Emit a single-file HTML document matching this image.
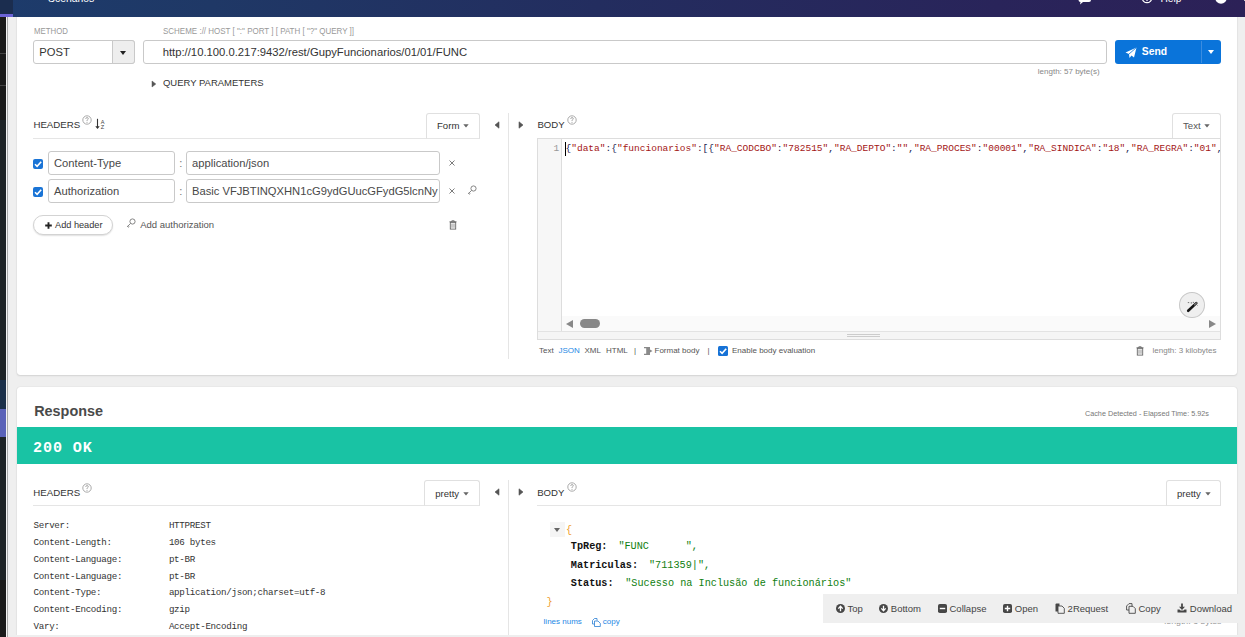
<!DOCTYPE html>
<html><head><meta charset="utf-8">
<style>
*{box-sizing:border-box;margin:0;padding:0}
html,body{width:1245px;height:637px;overflow:hidden;background:#efefef;font-family:"Liberation Sans",sans-serif;color:#333}
.a{position:absolute}
.t{position:absolute;white-space:pre;line-height:1}
.mono{font-family:"Liberation Mono",monospace}
.card{position:absolute;left:17px;width:1220px;background:#fff;border-radius:3px;box-shadow:0 0 1px rgba(0,0,0,.2),0 1px 2px rgba(0,0,0,.1)}
.inp{position:absolute;border:1px solid #c8c8c8;border-radius:3px;background:#fff}
.lbl{font-size:7.8px;color:#999}
.cb{position:absolute;width:10px;height:10px;background:#1672d6;border-radius:1.5px}
.tab{position:absolute;border:1px solid #ddd;border-bottom:none;border-radius:3px 3px 0 0;background:#fff}
.hline{position:absolute;height:1px;background:#e3e3e3}
.vline{position:absolute;width:1px;background:#e3e3e3}
.help{position:absolute;width:8px;height:8px;border:1px solid #aaa;border-radius:50%;font-size:6px;color:#999;text-align:center;line-height:6px}
</style></head><body>

<!-- left strip -->
<div class="a" style="left:0;top:0;width:6px;height:637px;background:#1a1a1a"></div>
<div class="a" style="left:0;top:120px;width:6px;height:260px;background:#1e2326"></div>
<div class="a" style="left:0;top:380px;width:6px;height:29px;background:#1a2f4a"></div>
<div class="a" style="left:0;top:409px;width:6px;height:28px;background:#5a62b8"></div>
<div class="a" style="left:0;top:437px;width:6px;height:143px;background:#1e2326"></div>
<div class="a" style="left:0;top:53px;width:6px;height:1px;background:#444"></div>
<div class="a" style="left:0;top:85px;width:6px;height:1px;background:#444"></div>
<div class="a" style="left:6px;top:0;width:1px;height:637px;background:#f4f4f4"></div>
<div class="a" style="left:7px;top:0;width:1px;height:637px;background:#a8a8a8"></div>

<!-- card 1 -->
<div class="card" style="top:-10px;height:384.5px"></div>

<!-- card 2 -->
<div class="card" style="top:387px;height:248px;border-radius:3px 3px 0 0"></div>

<!-- header bar -->
<div class="a" style="left:0;top:0;width:1245px;height:17px;background:linear-gradient(90deg,#1d3b6b 0%,#1f3866 17%,#232d5f 48%,#29245a 80%,#2c2157 100%)"></div>
<div class="a" style="left:0;top:0;width:13px;height:14px;background:#1b2d4f"></div>
<div class="a" style="left:0;top:14px;width:13px;height:3px;background:#6b63d6"></div>

<div class="t" style="left:48px;top:-6.5px;font-size:10.4px;color:#fff">Scenarios</div>
<svg class="a" style="left:1077px;top:-6px" width="16" height="11" viewBox="0 0 16 11"><path d="M1.5 0 H12 Q14 0 14 2 V6 Q14 8 12 8 H6 L3 10.5 L3.5 8 Q1.5 8 1.5 6 Z" fill="#fff"/></svg>
<svg class="a" style="left:1140.8px;top:-8.4px" width="12" height="12" viewBox="0 0 12 12"><circle cx="6" cy="6" r="4.7" fill="none" stroke="#fff" stroke-width="1.2"/><circle cx="6" cy="8.6" r="0.7" fill="#fff"/></svg>
<div class="t" style="left:1160.5px;top:-6.4px;font-size:10.2px;color:#fff">Help</div>
<svg class="a" style="left:1215.3px;top:-8.5px" width="12" height="12" viewBox="0 0 12 12"><circle cx="6" cy="6" r="5.8" fill="#fff"/></svg>
<div class="a" style="left:1243.5px;top:0;width:1.5px;height:1.2px;background:#ccc"></div>
<div class="t" style="left:33.60px;top:26.92px;font-size:8.6px;color:#999;transform:scaleX(0.91);transform-origin:0 0">METHOD</div>
<div class="t" style="left:163.00px;top:26.92px;font-size:8.6px;color:#999;transform:scaleX(0.93);transform-origin:0 0">SCHEME :// HOST [ ":" PORT ] [ PATH [ "?" QUERY ]]</div>
<div class="a" style="left:33px;top:40px;width:102.00px;height:24.00px;border:1px solid #c9c9c9;border-radius:3px;background:#fff"></div>
<div class="a" style="left:112px;top:40px;width:23.00px;height:24.00px;border:1px solid #c9c9c9;border-radius:0 3px 3px 0;background:#eee"></div>
<div class="a" style="left:120.3px;top:50.5px;width:0;height:0;border-left:3.5px solid transparent;border-right:3.5px solid transparent;border-top:4px solid #222"></div>
<div class="t" style="left:39.30px;top:46.72px;font-size:11.2px;color:#333;">POST</div>
<div class="a" style="left:143px;top:40px;width:964.00px;height:24.00px;border:1px solid #c9c9c9;border-radius:3px;background:#fff"></div>
<div class="t" style="left:162.70px;top:46.65px;font-size:11.28px;color:#333;">http://10.100.0.217:9432/rest/GupyFuncionarios/01/01/FUNC</div>
<div class="t" style="left:1037.80px;top:67.83px;font-size:8px;color:#888;">length: 57 byte(s)</div>
<div class="a" style="left:1115px;top:40px;width:106.00px;height:24.00px;background:#0a74da;border-radius:3px"></div>
<div class="a" style="left:1201px;top:41px;width:1.00px;height:22.00px;background:#3a8ce0"></div>
<div class="a" style="left:1207.6px;top:50px;width:0;height:0;border-left:3.7px solid transparent;border-right:3.7px solid transparent;border-top:4px solid #fff"></div>
<svg class="a" style="left:1125px;top:46.7px" width="12" height="12" viewBox="0 0 12 12"><path d="M11.5 0.5 L0.5 5.5 L4 7 L4.5 11 L6.5 8.5 L9 10.5 Z" fill="#fff"/><path d="M11.5 0.5 L4 7" stroke="#0b74d8" stroke-width="0.8"/></svg>
<div class="t" style="left:1141.80px;top:47.44px;font-size:10.35px;color:#fff;font-weight:bold;">Send</div>
<svg class="a" style="left:150.5px;top:80px" width="6" height="8" viewBox="0 0 6 8"><path d="M1 1 V7 L4.8 4 Z" fill="#555" stroke="#555" stroke-width="0.5" stroke-linejoin="round"/></svg>
<div class="t" style="left:162.90px;top:78.42px;font-size:9.9px;color:#333;transform:scaleX(0.96);transform-origin:0 0">QUERY PARAMETERS</div>
<div class="t" style="left:33.40px;top:120.09px;font-size:9.7px;color:#333;">HEADERS</div>
<svg class="a" style="left:82.4px;top:115.4px" width="10" height="10" viewBox="0 0 10 10"><circle cx="5" cy="5" r="4.2" fill="none" stroke="#8f8f8f" stroke-width="0.75"/><path d="M3.7 3.9 Q3.8 2.6 5 2.6 Q6.3 2.6 6.3 3.7 Q6.3 4.4 5.4 4.9 Q5 5.2 5 6" fill="none" stroke="#8a8a8a" stroke-width="0.75"/><circle cx="5" cy="7.2" r="0.5" fill="#8a8a8a"/></svg>
<svg class="a" style="left:94px;top:118px" width="12" height="12" viewBox="0 0 12 12"><path d="M3.5 0.8 V10" stroke="#333" stroke-width="1.1"/><path d="M1.3 8.2 L3.5 11 L5.7 8.2 Z" fill="#333"/><text x="8.5" y="5.6" font-size="5.6" text-anchor="middle" fill="#444" font-family="Liberation Sans">A</text><text x="8.5" y="11.3" font-size="5.6" text-anchor="middle" fill="#444" font-family="Liberation Sans">Z</text></svg>
<div class="a" style="left:33px;top:138px;width:447.00px;height:1.00px;background:#e5e5e5"></div>
<div class="a" style="left:426px;top:113px;width:54.00px;height:26.00px;border:1px solid #e0e0e0;border-bottom-color:#e5e5e5;border-radius:3px 3px 0 0;background:#fff"></div>
<div class="t" style="left:437.00px;top:120.97px;font-size:9.6px;color:#333;">Form</div>
<svg class="a" style="left:463.3px;top:124.4px" width="6" height="4" viewBox="0 0 6 4"><path d="M0.3 0.3 H5.7 L3 3.4 Z" fill="#666"/></svg>
<svg class="a" style="left:493.5px;top:121px" width="6" height="8" viewBox="0 0 6 8"><path d="M5 0.8 V7.2 L1 4 Z" fill="#555" stroke="#555" stroke-width="0.6" stroke-linejoin="round"/></svg>
<svg class="a" style="left:517.8px;top:121px" width="6" height="8" viewBox="0 0 6 8"><path d="M1 0.8 V7.2 L5 4 Z" fill="#555" stroke="#555" stroke-width="0.6" stroke-linejoin="round"/></svg>
<div class="a" style="left:508px;top:113px;width:1.00px;height:246.00px;background:#e5e5e5"></div>
<div class="a" style="left:33.4px;top:159px;width:10.00px;height:10.00px;background:#1a74d6;border-radius:2px"></div>
<svg class="a" style="left:33.4px;top:159px" width="10" height="10" viewBox="0 0 10 10"><path d="M2 5.2 L4.1 7.3 L8.2 2.8" stroke="#fff" stroke-width="1.6" fill="none"/></svg>
<div class="a" style="left:48px;top:151px;width:127.00px;height:24.00px;border:1px solid #c9c9c9;border-radius:3px;background:#fff"></div>
<div class="t" style="left:54.00px;top:157.82px;font-size:11.2px;color:#484848;">Content-Type</div>
<div class="t" style="left:179.30px;top:157.82px;font-size:11.2px;color:#777;">:</div>
<div class="a" style="left:186px;top:151px;width:254px;height:24px;border:1px solid #c9c9c9;border-radius:3px;background:#fff;overflow:hidden"><div class="t" style="left:5px;top:5.82px;font-size:11.2px;color:#484848">application/json</div></div>
<svg class="a" style="left:447.8px;top:159px" width="8" height="8" viewBox="0 0 8 8"><path d="M1.5 1.5 L6.5 6.5 M6.5 1.5 L1.5 6.5" stroke="#666" stroke-width="0.85"/></svg>
<div class="a" style="left:33.4px;top:187px;width:10.00px;height:10.00px;background:#1a74d6;border-radius:2px"></div>
<svg class="a" style="left:33.4px;top:187px" width="10" height="10" viewBox="0 0 10 10"><path d="M2 5.2 L4.1 7.3 L8.2 2.8" stroke="#fff" stroke-width="1.6" fill="none"/></svg>
<div class="a" style="left:48px;top:179px;width:127.00px;height:24.00px;border:1px solid #c9c9c9;border-radius:3px;background:#fff"></div>
<div class="t" style="left:54.00px;top:185.82px;font-size:11.2px;color:#484848;">Authorization</div>
<div class="t" style="left:179.30px;top:185.82px;font-size:11.2px;color:#777;">:</div>
<div class="a" style="left:186px;top:179px;width:254px;height:24px;border:1px solid #c9c9c9;border-radius:3px;background:#fff;overflow:hidden"><div class="t" style="left:5px;top:5.82px;font-size:11.2px;color:#484848">Basic VFJBTINQXHN1cG9ydGUucGFydG5lcnNy</div></div>
<svg class="a" style="left:447.8px;top:187px" width="8" height="8" viewBox="0 0 8 8"><path d="M1.5 1.5 L6.5 6.5 M6.5 1.5 L1.5 6.5" stroke="#666" stroke-width="0.85"/></svg>
<div class="a" style="left:33px;top:215px;width:80.00px;height:20.00px;border:1px solid #d3d3d3;border-radius:10px;background:#fff;box-shadow:0 1px 1.5px rgba(0,0,0,.12)"></div>
<svg class="a" style="left:44.5px;top:221.5px" width="7" height="7" viewBox="0 0 7 7"><path d="M3.5 0.2 V6.8 M0.2 3.5 H6.8" stroke="#222" stroke-width="1.9"/></svg>
<div class="t" style="left:55.00px;top:220.51px;font-size:9.2px;color:#333;">Add header</div>
<div class="t" style="left:140.20px;top:220.26px;font-size:9.5px;color:#555;">Add authorization</div>
<svg class="a" style="left:126px;top:217.5px" width="10" height="11" viewBox="0 0 10 11"><circle cx="6.5" cy="3.5" r="2.6" fill="none" stroke="#777" stroke-width="0.9"/><path d="M4.6 5.4 L1.2 8.8 M2.2 7.8 L3.2 8.8 M1.5 8.5 L2.5 9.5" stroke="#777" stroke-width="0.9"/></svg>
<svg class="a" style="left:467px;top:185px" width="10" height="11" viewBox="0 0 10 11"><circle cx="6.5" cy="3.5" r="2.6" fill="none" stroke="#777" stroke-width="0.9"/><path d="M4.6 5.4 L1.2 8.8 M2.2 7.8 L3.2 8.8 M1.5 8.5 L2.5 9.5" stroke="#777" stroke-width="0.9"/></svg>
<svg class="a" style="left:448.5px;top:219.5px" width="8" height="10" viewBox="0 0 8 10"><path d="M0.5 1.8 H7.5 M2.8 1.8 V0.8 H5.2 V1.8" fill="none" stroke="#666" stroke-width="0.9"/><rect x="1.3" y="2.3" width="5.4" height="6.8" fill="none" stroke="#666" stroke-width="0.9"/><path d="M3 3.5 V7.8 M5 3.5 V7.8" stroke="#666" stroke-width="0.7"/></svg>
<svg class="a" style="left:1135.5px;top:345.5px" width="8" height="10" viewBox="0 0 8 10"><path d="M0.5 1.8 H7.5 M2.8 1.8 V0.8 H5.2 V1.8" fill="none" stroke="#666" stroke-width="0.9"/><rect x="1.3" y="2.3" width="5.4" height="6.8" fill="none" stroke="#666" stroke-width="0.9"/><path d="M3 3.5 V7.8 M5 3.5 V7.8" stroke="#666" stroke-width="0.7"/></svg>
<div class="t" style="left:537.40px;top:120.17px;font-size:9.6px;color:#333;">BODY</div>
<svg class="a" style="left:567.2px;top:115.4px" width="10" height="10" viewBox="0 0 10 10"><circle cx="5" cy="5" r="4.2" fill="none" stroke="#8f8f8f" stroke-width="0.75"/><path d="M3.7 3.9 Q3.8 2.6 5 2.6 Q6.3 2.6 6.3 3.7 Q6.3 4.4 5.4 4.9 Q5 5.2 5 6" fill="none" stroke="#8a8a8a" stroke-width="0.75"/><circle cx="5" cy="7.2" r="0.5" fill="#8a8a8a"/></svg>
<div class="a" style="left:1172px;top:113px;width:49.00px;height:26.00px;border:1px solid #e0e0e0;border-bottom-color:#e5e5e5;border-radius:3px 3px 0 0;background:#fff"></div>
<div class="t" style="left:1183.00px;top:120.97px;font-size:9.6px;color:#555;">Text</div>
<svg class="a" style="left:1204.3px;top:124.4px" width="6" height="4" viewBox="0 0 6 4"><path d="M0.3 0.3 H5.7 L3 3.4 Z" fill="#666"/></svg>
<div class="a" style="left:537px;top:138px;width:684.00px;height:202.00px;border:1px solid #ddd;background:#fff"></div>
<div class="a" style="left:538.4px;top:139.4px;width:23.60px;height:191.90px;background:#f7f7f7;border-right:1px solid #ddd"></div>
<div class="t" style="left:553.50px;top:143.72px;font-size:9.5px;color:#999;font-family:'Liberation Mono',monospace;">1</div>
<div class="a" style="left:565px;top:141.5px;width:1.00px;height:14.00px;background:#000"></div>
<div class="a" style="left:538px;top:139px;width:682px;height:177px;overflow:hidden"><div class="t" style="left:27.5px;top:4.70px;font-size:9.53px;font-family:'Liberation Mono',monospace"><span style="color:#202050">{</span><span style="color:#a31515">&quot;data&quot;</span><span style="color:#202050">:</span><span style="color:#202050">{</span><span style="color:#a31515">&quot;funcionarios&quot;</span><span style="color:#202050">:</span><span style="color:#202050">[</span><span style="color:#202050">{</span><span style="color:#a31515">&quot;RA_CODCBO&quot;</span><span style="color:#202050">:</span><span style="color:#a31515">&quot;782515&quot;</span><span style="color:#202050">,</span><span style="color:#a31515">&quot;RA_DEPTO&quot;</span><span style="color:#202050">:</span><span style="color:#a31515">&quot;&quot;</span><span style="color:#202050">,</span><span style="color:#a31515">&quot;RA_PROCES&quot;</span><span style="color:#202050">:</span><span style="color:#a31515">&quot;00001&quot;</span><span style="color:#202050">,</span><span style="color:#a31515">&quot;RA_SINDICA&quot;</span><span style="color:#202050">:</span><span style="color:#a31515">&quot;18&quot;</span><span style="color:#202050">,</span><span style="color:#a31515">&quot;RA_REGRA&quot;</span><span style="color:#202050">:</span><span style="color:#a31515">&quot;01&quot;</span><span style="color:#202050">,</span></div></div>
<div class="a" style="left:562px;top:316px;width:657.50px;height:15.30px;background:#fafafa"></div>
<div class="a" style="left:566px;top:319.5px;width:0;height:0;border-top:4px solid transparent;border-bottom:4px solid transparent;border-right:7px solid #888"></div>
<div class="a" style="left:580px;top:319px;width:20.00px;height:8.70px;background:#888;border-radius:4.5px"></div>
<div class="a" style="left:1208.5px;top:319.5px;width:0;height:0;border-top:4px solid transparent;border-bottom:4px solid transparent;border-left:7px solid #888"></div>
<div class="a" style="left:538px;top:331px;width:682.00px;height:8.00px;background:#f5f5f5;border-top:1px solid #e3e3e3"></div>
<div class="a" style="left:847px;top:334px;width:33.00px;height:1.00px;background:#ccc"></div>
<div class="a" style="left:847px;top:336px;width:33.00px;height:1.00px;background:#ccc"></div>
<div class="a" style="left:1179.2px;top:292.2px;width:25.60px;height:26.30px;border:1px solid #c8c8c8;border-radius:50%;background:#efefef"></div>
<svg class="a" style="left:1184px;top:297px" width="16" height="16" viewBox="0 0 16 16"><path d="M4.2 13.8 L12.3 6.1" stroke="#151515" stroke-width="2.6" stroke-linecap="round"/><path d="M10.6 7.7 L12.3 6.1" stroke="#777" stroke-width="1.4" stroke-linecap="round"/><path d="M3.8 5.6 h1.4 M7.3 5.2 v1.4 M8.8 5.4 h1.2 M13.4 8.4 l0.5 0.5" stroke="#555" stroke-width="0.8"/></svg>
<div class="t" style="left:539.00px;top:346.93px;font-size:8px;color:#555;">Text</div>
<div class="t" style="left:558.50px;top:346.93px;font-size:8px;color:#1e88e5;">JSON</div>
<div class="t" style="left:584.50px;top:346.93px;font-size:8px;color:#555;">XML</div>
<div class="t" style="left:606.00px;top:346.93px;font-size:8px;color:#555;">HTML</div>
<div class="t" style="left:634.00px;top:346.93px;font-size:8px;color:#555;">|</div>
<div class="t" style="left:654.50px;top:346.93px;font-size:8px;color:#555;">Format body</div>
<svg class="a" style="left:644px;top:347px" width="9" height="8" viewBox="0 0 9 8"><path d="M0 0 H6 L6 2.5 L8.5 4 L6 5.5 V8 H0 V6.8 H2.2 V1.2 H0 Z" fill="#8a8a8a"/></svg>
<div class="t" style="left:707.50px;top:346.93px;font-size:8px;color:#555;">|</div>
<div class="a" style="left:718px;top:346px;width:10.00px;height:10.00px;background:#1672d6;border-radius:1.5px"></div>
<svg class="a" style="left:718px;top:346px" width="10" height="10" viewBox="0 0 10 10"><path d="M2 5.2 L4.1 7.3 L8.2 2.8" stroke="#fff" stroke-width="1.6" fill="none"/></svg>
<div class="t" style="left:732.00px;top:346.93px;font-size:8px;color:#555;">Enable body evaluation</div>
<div class="t" style="left:1152.50px;top:346.93px;font-size:8px;color:#888;">length: 3 kilobytes</div>
<div class="t" style="left:34.20px;top:404.11px;font-size:14.4px;color:#4a4a4a;font-weight:bold;">Response</div>
<div class="t" style="left:1085.00px;top:410.37px;font-size:7.24px;color:#777;">Cache Detected - Elapsed Time: 5.92s</div>
<div class="a" style="left:17px;top:427px;width:1220.00px;height:37.00px;background:#19c3a4"></div>
<div class="t" style="left:33.00px;top:441.03px;font-size:15.1px;color:#fff;font-family:'Liberation Mono',monospace;font-weight:bold;letter-spacing:0.9px">200 OK</div>
<div class="t" style="left:33.30px;top:487.79px;font-size:9.7px;color:#333;">HEADERS</div>
<svg class="a" style="left:82.4px;top:482.5px" width="10" height="10" viewBox="0 0 10 10"><circle cx="5" cy="5" r="4.2" fill="none" stroke="#8f8f8f" stroke-width="0.75"/><path d="M3.7 3.9 Q3.8 2.6 5 2.6 Q6.3 2.6 6.3 3.7 Q6.3 4.4 5.4 4.9 Q5 5.2 5 6" fill="none" stroke="#8a8a8a" stroke-width="0.75"/><circle cx="5" cy="7.2" r="0.5" fill="#8a8a8a"/></svg>
<div class="a" style="left:33px;top:505px;width:447.00px;height:1.00px;background:#e5e5e5"></div>
<div class="a" style="left:424px;top:480px;width:56.00px;height:26.00px;border:1px solid #e0e0e0;border-bottom-color:#e5e5e5;border-radius:3px 3px 0 0;background:#fff"></div>
<div class="t" style="left:435.30px;top:489.16px;font-size:9.5px;color:#333;">pretty</div>
<svg class="a" style="left:463.3px;top:491.8px" width="6" height="4" viewBox="0 0 6 4"><path d="M0.3 0.3 H5.7 L3 3.4 Z" fill="#666"/></svg>
<svg class="a" style="left:493.5px;top:488px" width="6" height="8" viewBox="0 0 6 8"><path d="M5 0.8 V7.2 L1 4 Z" fill="#555" stroke="#555" stroke-width="0.6" stroke-linejoin="round"/></svg>
<svg class="a" style="left:517.8px;top:488px" width="6" height="8" viewBox="0 0 6 8"><path d="M1 0.8 V7.2 L5 4 Z" fill="#555" stroke="#555" stroke-width="0.6" stroke-linejoin="round"/></svg>
<div class="a" style="left:508px;top:480px;width:1.00px;height:157.00px;background:#e5e5e5"></div>
<div class="t" style="left:33.50px;top:521.05px;font-size:9.2px;color:#333;font-family:'Liberation Mono',monospace;letter-spacing:-0.3px">Server:</div>
<div class="t" style="left:168.90px;top:521.05px;font-size:9.2px;color:#333;font-family:'Liberation Mono',monospace;letter-spacing:-0.3px">HTTPREST</div>
<div class="t" style="left:33.50px;top:537.88px;font-size:9.2px;color:#333;font-family:'Liberation Mono',monospace;letter-spacing:-0.3px">Content-Length:</div>
<div class="t" style="left:168.90px;top:537.88px;font-size:9.2px;color:#333;font-family:'Liberation Mono',monospace;letter-spacing:-0.3px">106 bytes</div>
<div class="t" style="left:33.50px;top:554.71px;font-size:9.2px;color:#333;font-family:'Liberation Mono',monospace;letter-spacing:-0.3px">Content-Language:</div>
<div class="t" style="left:168.90px;top:554.71px;font-size:9.2px;color:#333;font-family:'Liberation Mono',monospace;letter-spacing:-0.3px">pt-BR</div>
<div class="t" style="left:33.50px;top:571.54px;font-size:9.2px;color:#333;font-family:'Liberation Mono',monospace;letter-spacing:-0.3px">Content-Language:</div>
<div class="t" style="left:168.90px;top:571.54px;font-size:9.2px;color:#333;font-family:'Liberation Mono',monospace;letter-spacing:-0.3px">pt-BR</div>
<div class="t" style="left:33.50px;top:588.37px;font-size:9.2px;color:#333;font-family:'Liberation Mono',monospace;letter-spacing:-0.3px">Content-Type:</div>
<div class="t" style="left:168.90px;top:588.37px;font-size:9.2px;color:#333;font-family:'Liberation Mono',monospace;letter-spacing:-0.3px">application/json;charset=utf-8</div>
<div class="t" style="left:33.50px;top:605.20px;font-size:9.2px;color:#333;font-family:'Liberation Mono',monospace;letter-spacing:-0.3px">Content-Encoding:</div>
<div class="t" style="left:168.90px;top:605.20px;font-size:9.2px;color:#333;font-family:'Liberation Mono',monospace;letter-spacing:-0.3px">gzip</div>
<div class="t" style="left:33.50px;top:622.03px;font-size:9.2px;color:#333;font-family:'Liberation Mono',monospace;letter-spacing:-0.3px">Vary:</div>
<div class="t" style="left:168.90px;top:622.03px;font-size:9.2px;color:#333;font-family:'Liberation Mono',monospace;letter-spacing:-0.3px">Accept-Encoding</div>
<div class="t" style="left:537.20px;top:487.87px;font-size:9.6px;color:#333;">BODY</div>
<svg class="a" style="left:567.2px;top:482.3px" width="10" height="10" viewBox="0 0 10 10"><circle cx="5" cy="5" r="4.2" fill="none" stroke="#8f8f8f" stroke-width="0.75"/><path d="M3.7 3.9 Q3.8 2.6 5 2.6 Q6.3 2.6 6.3 3.7 Q6.3 4.4 5.4 4.9 Q5 5.2 5 6" fill="none" stroke="#8a8a8a" stroke-width="0.75"/><circle cx="5" cy="7.2" r="0.5" fill="#8a8a8a"/></svg>
<div class="a" style="left:537px;top:505px;width:684.00px;height:1.00px;background:#e5e5e5"></div>
<div class="a" style="left:1166px;top:480px;width:55.00px;height:26.00px;border:1px solid #e0e0e0;border-bottom-color:#e5e5e5;border-radius:3px 3px 0 0;background:#fff"></div>
<div class="t" style="left:1177.00px;top:489.16px;font-size:9.5px;color:#333;">pretty</div>
<svg class="a" style="left:1204.8px;top:491.8px" width="6" height="4" viewBox="0 0 6 4"><path d="M0.3 0.3 H5.7 L3 3.4 Z" fill="#666"/></svg>
<div class="a" style="left:550px;top:522px;width:15.00px;height:15.00px;background:#f5f5f5"></div>
<div class="a" style="left:554px;top:528px;width:0;height:0;border-left:3.5px solid transparent;border-right:3.5px solid transparent;border-top:4px solid #666"></div>
<div class="t" style="left:566.00px;top:526.18px;font-size:10.2px;color:#f0a030;font-family:'Liberation Mono',monospace;">{</div>
<div class="t" style="left:570.80px;top:542.18px;font-size:10.2px;color:#111;font-family:'Liberation Mono',monospace;font-weight:bold;">TpReg:</div>
<div class="t" style="left:618.40px;top:542.18px;font-size:10.2px;color:#108010;font-family:'Liberation Mono',monospace;">"FUNC      ",</div>
<div class="t" style="left:570.80px;top:561.18px;font-size:10.2px;color:#111;font-family:'Liberation Mono',monospace;font-weight:bold;">Matriculas:</div>
<div class="t" style="left:649.00px;top:561.18px;font-size:10.2px;color:#108010;font-family:'Liberation Mono',monospace;">"711359|",</div>
<div class="t" style="left:570.80px;top:578.68px;font-size:10.2px;color:#111;font-family:'Liberation Mono',monospace;font-weight:bold;">Status:</div>
<div class="t" style="left:625.20px;top:578.68px;font-size:10.2px;color:#108010;font-family:'Liberation Mono',monospace;">"Sucesso na Inclusão de funcionários"</div>
<div class="t" style="left:546.60px;top:597.68px;font-size:10.2px;color:#f0a030;font-family:'Liberation Mono',monospace;">}</div>
<div class="t" style="left:543.60px;top:618.23px;font-size:8px;color:#1e88e5;">lines nums</div>
<div class="t" style="left:602.80px;top:618.23px;font-size:8px;color:#1e88e5;">copy</div>
<svg class="a" style="left:592px;top:617.5px" width="9" height="9" viewBox="0 0 9 9"><path d="M0.5 2.5 L2.5 0.5 H5 V2.5 M0.5 2.5 V6 H2.5" fill="none" stroke="#2a7fd4" stroke-width="0.8"/><path d="M2.5 3 H6 L8.3 5.3 V8.5 H2.5 Z" fill="none" stroke="#2a7fd4" stroke-width="0.8"/></svg>
<div class="t" style="left:1164.30px;top:616.65px;font-size:8.8px;color:#999;">length: 3 bytes</div>
<div class="a" style="left:823px;top:593.5px;width:422.00px;height:29.20px;background:#efefef"></div>
<svg class="a" style="left:835.8px;top:603.8px" width="9" height="9" viewBox="0 0 9 9"><circle cx="4.5" cy="4.5" r="4.5" fill="#474747"/><path d="M4.5 7.2 V2.6 M2.3 4.6 L4.5 2.3 L6.7 4.6" stroke="#fff" stroke-width="1.3" fill="none"/></svg>
<svg class="a" style="left:879.2px;top:603.8px" width="9" height="9" viewBox="0 0 9 9"><circle cx="4.5" cy="4.5" r="4.5" fill="#474747"/><path d="M4.5 1.8 V6.4 M2.3 4.4 L4.5 6.7 L6.7 4.4" stroke="#fff" stroke-width="1.3" fill="none"/></svg>
<svg class="a" style="left:937.9px;top:604px" width="9" height="9" viewBox="0 0 9 9"><rect x="0" y="0" width="9" height="9" rx="1.8" fill="#474747"/><path d="M1.8 4.5 H7.2" stroke="#fff" stroke-width="1.4"/></svg>
<svg class="a" style="left:1003.4px;top:604px" width="9" height="9" viewBox="0 0 9 9"><rect x="0" y="0" width="9" height="9" rx="1.8" fill="#474747"/><path d="M1.8 4.5 H7.2 M4.5 1.8 V7.2" stroke="#fff" stroke-width="1.4"/></svg>
<svg class="a" style="left:1055px;top:603px" width="10" height="11" viewBox="0 0 10 11"><path d="M0.5 1.5 Q0.5 0.5 1.5 0.5 H4.5 V8.5 H0.5 Z" fill="#474747"/><path d="M3 3 H7 L9.3 5.3 V10.3 H3 Z" fill="#f0f0f0" stroke="#474747" stroke-width="0.9"/></svg>
<svg class="a" style="left:1126px;top:603px" width="10" height="11" viewBox="0 0 10 11"><path d="M0.6 3 L3 0.6 H6 V3.5 M0.6 3 V7 H3" fill="none" stroke="#474747" stroke-width="0.9"/><path d="M3 3.3 H7 L9.3 5.6 V10.3 H3 Z" fill="none" stroke="#474747" stroke-width="0.9"/></svg>
<svg class="a" style="left:1177px;top:603px" width="10" height="10" viewBox="0 0 10 10"><path d="M5 0.5 V6" stroke="#474747" stroke-width="1.8"/><path d="M2 3.8 L5 7 L8 3.8 Z" fill="#474747"/><path d="M0.5 6.5 V9.5 H9.5 V6.5 H7.5 L6.5 7.5 H3.5 L2.5 6.5 Z" fill="#474747"/></svg>
<div class="t" style="left:847.50px;top:603.56px;font-size:9.5px;color:#444;">Top</div>
<div class="t" style="left:890.80px;top:603.56px;font-size:9.5px;color:#444;">Bottom</div>
<div class="t" style="left:949.50px;top:603.56px;font-size:9.5px;color:#444;">Collapse</div>
<div class="t" style="left:1014.80px;top:603.56px;font-size:9.5px;color:#444;">Open</div>
<div class="t" style="left:1067.60px;top:603.56px;font-size:9.5px;color:#444;">2Request</div>
<div class="t" style="left:1138.50px;top:603.56px;font-size:9.5px;color:#444;">Copy</div>
<div class="t" style="left:1189.80px;top:603.56px;font-size:9.5px;color:#444;">Download</div>
<div class="a" style="left:8px;top:635px;width:1237px;height:2px;background:#eee"></div>
</body></html>
